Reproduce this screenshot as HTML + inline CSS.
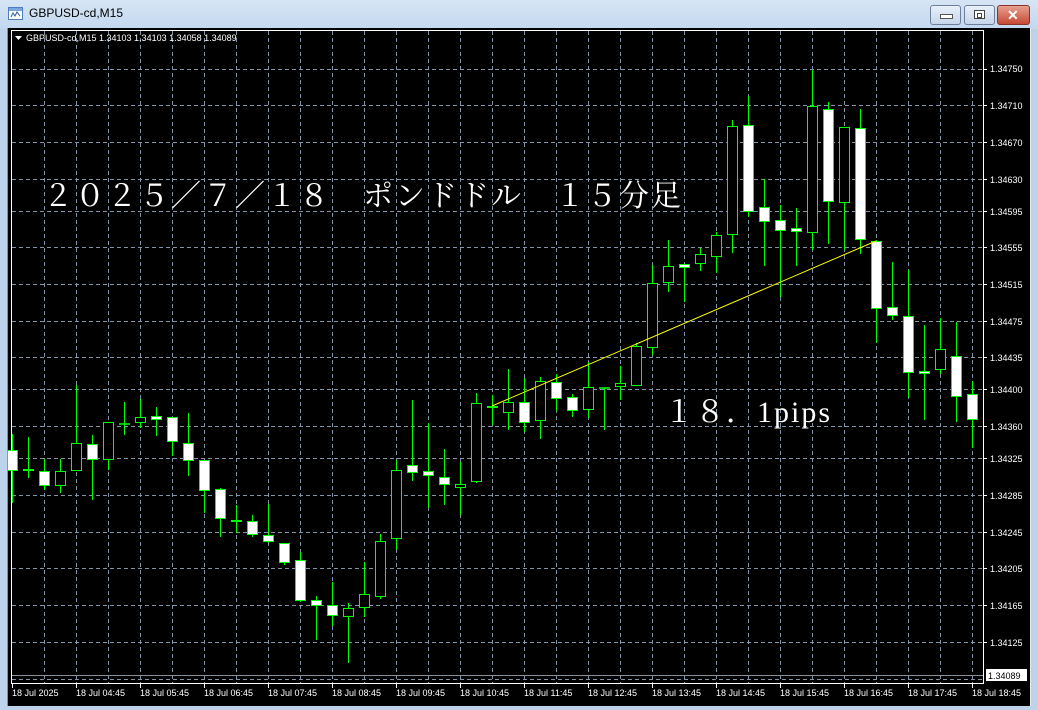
<!DOCTYPE html>
<html><head><meta charset="utf-8"><style>
html,body{margin:0;padding:0;width:1038px;height:710px;overflow:hidden;background:#bdd3ec;font-family:"Liberation Sans",sans-serif}
#tb{position:absolute;left:0;top:0;width:1038px;height:29px;background:linear-gradient(#d6e5f5,#c3d8ef)}
#tt{position:absolute;left:29px;top:6px;font-size:12px;color:#000}
.btn{position:absolute;top:5px;height:18px;border:1px solid #6d7f99;border-radius:3px;background:linear-gradient(#e8f0fa,#c6d6ea)}
</style></head><body>
<div id="tb"></div>
<svg style="position:absolute;left:8px;top:7px" width="16" height="14"><rect x="0.5" y="0.5" width="14" height="12" fill="#fff" stroke="#4b7ec0"/><rect x="1" y="1" width="13" height="3" fill="#7aa6dc"/><path d="M3 10 L5 6 L7 9 L9 5 L12 9" stroke="#2a5fa8" fill="none"/></svg>
<div id="tt">GBPUSD-cd,M15</div>
<div class="btn" style="left:930px;width:29px"><div style="position:absolute;left:9px;top:8px;width:11px;height:3px;background:#fff;border:1px solid #555"></div></div>
<div class="btn" style="left:964px;width:29px"><div style="position:absolute;left:9px;top:4px;width:9px;height:7px;border:1px solid #444;background:#fff"><div style="margin:2px;height:3px;border:1px solid #444;width:3px"></div></div></div>
<div class="btn" style="left:997px;width:31px;background:linear-gradient(#e7a090,#c64a36);border-color:#8a3328"><div style="position:absolute;left:9px;top:1px;color:#fff;font-weight:bold;font-size:14px">✕</div></div>
<svg style="position:absolute;left:0;top:0" width="1038" height="710" font-family="Liberation Sans, sans-serif">
<rect x="8" y="28" width="1022" height="678" fill="#000"/>
<rect x="7" y="28" width="1" height="678" fill="#8a8f96"/>
<rect x="1030" y="28" width="1" height="678" fill="#e8e8e8"/>
<g stroke="#8494a8" stroke-width="1" stroke-dasharray="4,3">
<line x1="12" y1="69.5" x2="983" y2="69.5"/><line x1="12" y1="105.5" x2="983" y2="105.5"/><line x1="12" y1="142.5" x2="983" y2="142.5"/><line x1="12" y1="179.5" x2="983" y2="179.5"/><line x1="12" y1="211.5" x2="983" y2="211.5"/><line x1="12" y1="247.5" x2="983" y2="247.5"/><line x1="12" y1="284.5" x2="983" y2="284.5"/><line x1="12" y1="321.5" x2="983" y2="321.5"/><line x1="12" y1="357.5" x2="983" y2="357.5"/><line x1="12" y1="389.5" x2="983" y2="389.5"/><line x1="12" y1="426.5" x2="983" y2="426.5"/><line x1="12" y1="458.5" x2="983" y2="458.5"/><line x1="12" y1="495.5" x2="983" y2="495.5"/><line x1="12" y1="532.5" x2="983" y2="532.5"/><line x1="12" y1="568.5" x2="983" y2="568.5"/><line x1="12" y1="605.5" x2="983" y2="605.5"/><line x1="12" y1="642.5" x2="983" y2="642.5"/><line x1="12" y1="679.5" x2="983" y2="679.5"/>
<line x1="44.5" y1="31" x2="44.5" y2="683"/><line x1="76.5" y1="31" x2="76.5" y2="683"/><line x1="108.5" y1="31" x2="108.5" y2="683"/><line x1="140.5" y1="31" x2="140.5" y2="683"/><line x1="172.5" y1="31" x2="172.5" y2="683"/><line x1="204.5" y1="31" x2="204.5" y2="683"/><line x1="236.5" y1="31" x2="236.5" y2="683"/><line x1="268.5" y1="31" x2="268.5" y2="683"/><line x1="300.5" y1="31" x2="300.5" y2="683"/><line x1="332.5" y1="31" x2="332.5" y2="683"/><line x1="364.5" y1="31" x2="364.5" y2="683"/><line x1="396.5" y1="31" x2="396.5" y2="683"/><line x1="428.5" y1="31" x2="428.5" y2="683"/><line x1="460.5" y1="31" x2="460.5" y2="683"/><line x1="492.5" y1="31" x2="492.5" y2="683"/><line x1="524.5" y1="31" x2="524.5" y2="683"/><line x1="556.5" y1="31" x2="556.5" y2="683"/><line x1="588.5" y1="31" x2="588.5" y2="683"/><line x1="620.5" y1="31" x2="620.5" y2="683"/><line x1="652.5" y1="31" x2="652.5" y2="683"/><line x1="684.5" y1="31" x2="684.5" y2="683"/><line x1="716.5" y1="31" x2="716.5" y2="683"/><line x1="748.5" y1="31" x2="748.5" y2="683"/><line x1="780.5" y1="31" x2="780.5" y2="683"/><line x1="812.5" y1="31" x2="812.5" y2="683"/><line x1="844.5" y1="31" x2="844.5" y2="683"/><line x1="876.5" y1="31" x2="876.5" y2="683"/><line x1="908.5" y1="31" x2="908.5" y2="683"/><line x1="940.5" y1="31" x2="940.5" y2="683"/><line x1="972.5" y1="31" x2="972.5" y2="683"/>
</g>
<line x1="12" y1="675.5" x2="983" y2="675.5" stroke="#8a9098"/>
<g stroke="#00ff00" stroke-width="1" fill="#000">
<line x1="12.5" y1="434" x2="12.5" y2="503"/><rect x="7.5" y="450.5" width="10" height="20" fill="#fff"/>
<line x1="28.5" y1="437" x2="28.5" y2="478"/><line x1="23" y1="470" x2="34" y2="470" stroke-width="2"/>
<line x1="44.5" y1="459" x2="44.5" y2="490"/><rect x="39.5" y="471.5" width="10" height="14" fill="#fff"/>
<line x1="60.5" y1="459" x2="60.5" y2="493"/><rect x="55.5" y="471.5" width="10" height="14"/>
<line x1="76.5" y1="385" x2="76.5" y2="470"/><rect x="71.5" y="443.5" width="10" height="27"/>
<line x1="92.5" y1="435" x2="92.5" y2="500"/><rect x="87.5" y="444.5" width="10" height="15" fill="#fff"/>
<line x1="108.5" y1="422" x2="108.5" y2="470"/><rect x="103.5" y="422.5" width="10" height="37"/>
<line x1="124.5" y1="402" x2="124.5" y2="435"/><line x1="119" y1="424" x2="130" y2="424" stroke-width="1.5"/>
<line x1="140.5" y1="399" x2="140.5" y2="428"/><rect x="135.5" y="417.5" width="10" height="5"/>
<line x1="156.5" y1="407" x2="156.5" y2="436"/><rect x="151.5" y="416.5" width="10" height="3" fill="#fff"/>
<line x1="172.5" y1="417" x2="172.5" y2="456"/><rect x="167.5" y="417.5" width="10" height="24" fill="#fff"/>
<line x1="188.5" y1="413" x2="188.5" y2="476"/><rect x="183.5" y="443.5" width="10" height="17" fill="#fff"/>
<line x1="204.5" y1="460" x2="204.5" y2="513"/><rect x="199.5" y="460.5" width="10" height="30" fill="#fff"/>
<line x1="220.5" y1="488" x2="220.5" y2="537"/><rect x="215.5" y="489.5" width="10" height="29" fill="#fff"/>
<line x1="236.5" y1="505" x2="236.5" y2="533"/><line x1="231" y1="521" x2="242" y2="521" stroke-width="2"/>
<line x1="252.5" y1="515" x2="252.5" y2="537"/><rect x="247.5" y="521.5" width="10" height="13" fill="#fff"/>
<line x1="268.5" y1="504" x2="268.5" y2="543"/><rect x="263.5" y="535.5" width="10" height="6" fill="#fff"/>
<line x1="284.5" y1="543" x2="284.5" y2="565"/><rect x="279.5" y="543.5" width="10" height="19" fill="#fff"/>
<line x1="300.5" y1="552" x2="300.5" y2="602"/><rect x="295.5" y="560.5" width="10" height="40" fill="#fff"/>
<line x1="316.5" y1="596" x2="316.5" y2="640"/><rect x="311.5" y="600.5" width="10" height="5" fill="#fff"/>
<line x1="332.5" y1="582" x2="332.5" y2="626"/><rect x="327.5" y="605.5" width="10" height="10" fill="#fff"/>
<line x1="348.5" y1="603" x2="348.5" y2="663"/><rect x="343.5" y="608.5" width="10" height="8"/>
<line x1="364.5" y1="562" x2="364.5" y2="617"/><rect x="359.5" y="594.5" width="10" height="13"/>
<line x1="380.5" y1="534" x2="380.5" y2="599"/><rect x="375.5" y="541.5" width="10" height="55"/>
<line x1="396.5" y1="460" x2="396.5" y2="550"/><rect x="391.5" y="470.5" width="10" height="68"/>
<line x1="412.5" y1="400" x2="412.5" y2="481"/><rect x="407.5" y="465.5" width="10" height="7" fill="#fff"/>
<line x1="428.5" y1="423" x2="428.5" y2="508"/><rect x="423.5" y="471.5" width="10" height="4" fill="#fff"/>
<line x1="444.5" y1="449" x2="444.5" y2="505"/><rect x="439.5" y="477.5" width="10" height="7" fill="#fff"/>
<line x1="460.5" y1="462" x2="460.5" y2="515"/><rect x="455.5" y="484.5" width="10" height="3"/>
<line x1="476.5" y1="393" x2="476.5" y2="483"/><rect x="471.5" y="403.5" width="10" height="78"/>
<line x1="492.5" y1="395" x2="492.5" y2="425"/><line x1="487" y1="407" x2="498" y2="407" stroke-width="2"/>
<line x1="508.5" y1="369" x2="508.5" y2="430"/><rect x="503.5" y="402.5" width="10" height="10"/>
<line x1="524.5" y1="378" x2="524.5" y2="432"/><rect x="519.5" y="402.5" width="10" height="20" fill="#fff"/>
<line x1="540.5" y1="377" x2="540.5" y2="439"/><rect x="535.5" y="381.5" width="10" height="39"/>
<line x1="556.5" y1="374" x2="556.5" y2="411"/><rect x="551.5" y="382.5" width="10" height="16" fill="#fff"/>
<line x1="572.5" y1="394" x2="572.5" y2="417"/><rect x="567.5" y="397.5" width="10" height="13" fill="#fff"/>
<line x1="588.5" y1="362" x2="588.5" y2="418"/><rect x="583.5" y="387.5" width="10" height="22"/>
<line x1="604.5" y1="388" x2="604.5" y2="430"/><line x1="599" y1="388" x2="610" y2="388" stroke-width="1.5"/>
<line x1="620.5" y1="366" x2="620.5" y2="400"/><rect x="615.5" y="383.5" width="10" height="3"/>
<line x1="636.5" y1="343" x2="636.5" y2="385"/><rect x="631.5" y="346.5" width="10" height="39"/>
<line x1="652.5" y1="265" x2="652.5" y2="355"/><rect x="647.5" y="283.5" width="10" height="64"/>
<line x1="668.5" y1="240" x2="668.5" y2="292"/><rect x="663.5" y="266.5" width="10" height="16"/>
<line x1="684.5" y1="264" x2="684.5" y2="302"/><rect x="679.5" y="264.5" width="10" height="3" fill="#fff"/>
<line x1="700.5" y1="248" x2="700.5" y2="271"/><rect x="695.5" y="254.5" width="10" height="9"/>
<line x1="716.5" y1="232" x2="716.5" y2="273"/><rect x="711.5" y="235.5" width="10" height="21"/>
<line x1="732.5" y1="120" x2="732.5" y2="253"/><rect x="727.5" y="126.5" width="10" height="108"/>
<line x1="748.5" y1="96" x2="748.5" y2="217"/><rect x="743.5" y="125.5" width="10" height="86" fill="#fff"/>
<line x1="764.5" y1="179" x2="764.5" y2="266"/><rect x="759.5" y="207.5" width="10" height="14" fill="#fff"/>
<line x1="780.5" y1="205" x2="780.5" y2="297"/><rect x="775.5" y="220.5" width="10" height="10" fill="#fff"/>
<line x1="796.5" y1="208" x2="796.5" y2="266"/><rect x="791.5" y="228.5" width="10" height="3" fill="#fff"/>
<line x1="812.5" y1="70" x2="812.5" y2="250"/><rect x="807.5" y="106.5" width="10" height="126"/>
<line x1="828.5" y1="102" x2="828.5" y2="244"/><rect x="823.5" y="109.5" width="10" height="92" fill="#fff"/>
<line x1="844.5" y1="127" x2="844.5" y2="250"/><rect x="839.5" y="127.5" width="10" height="75"/>
<line x1="860.5" y1="109" x2="860.5" y2="254"/><rect x="855.5" y="128.5" width="10" height="111" fill="#fff"/>
<line x1="876.5" y1="240" x2="876.5" y2="343"/><rect x="871.5" y="241.5" width="10" height="67" fill="#fff"/>
<line x1="892.5" y1="262" x2="892.5" y2="320"/><rect x="887.5" y="307.5" width="10" height="8" fill="#fff"/>
<line x1="908.5" y1="270" x2="908.5" y2="398"/><rect x="903.5" y="316.5" width="10" height="56" fill="#fff"/>
<line x1="924.5" y1="325" x2="924.5" y2="420"/><rect x="919.5" y="371.5" width="10" height="2" fill="#fff"/>
<line x1="940.5" y1="318" x2="940.5" y2="374"/><rect x="935.5" y="349.5" width="10" height="20"/>
<line x1="956.5" y1="322" x2="956.5" y2="422"/><rect x="951.5" y="356.5" width="10" height="40" fill="#fff"/>
<line x1="972.5" y1="381" x2="972.5" y2="448"/><rect x="967.5" y="394.5" width="10" height="25" fill="#fff"/>
</g>
<line x1="492" y1="406" x2="876" y2="241" stroke="#ffff00" stroke-width="1"/>
<path d="M11.5 30.5 H983.5 V683.5 H11.5 Z" fill="none" stroke="#fff"/>
<g fill="#fff" font-size="9">
<path d="M15 36 h7 l-3.5 4 z"/>
<text x="26" y="41">GBPUSD-cd,M15  1.34103 1.34103 1.34058 1.34089</text>
<g>
<text x="990" y="72">1.34750</text><text x="990" y="109">1.34710</text><text x="990" y="146">1.34670</text><text x="990" y="183">1.34630</text><text x="990" y="215">1.34595</text><text x="990" y="251">1.34555</text><text x="990" y="288">1.34515</text><text x="990" y="325">1.34475</text><text x="990" y="361">1.34435</text><text x="990" y="393">1.34400</text><text x="990" y="430">1.34360</text><text x="990" y="462">1.34325</text><text x="990" y="499">1.34285</text><text x="990" y="536">1.34245</text><text x="990" y="572">1.34205</text><text x="990" y="609">1.34165</text><text x="990" y="646">1.34125</text>
</g>
<g stroke="#fff"><line x1="983" y1="69.5" x2="987" y2="69.5"/><line x1="983" y1="105.5" x2="987" y2="105.5"/><line x1="983" y1="142.5" x2="987" y2="142.5"/><line x1="983" y1="179.5" x2="987" y2="179.5"/><line x1="983" y1="211.5" x2="987" y2="211.5"/><line x1="983" y1="247.5" x2="987" y2="247.5"/><line x1="983" y1="284.5" x2="987" y2="284.5"/><line x1="983" y1="321.5" x2="987" y2="321.5"/><line x1="983" y1="357.5" x2="987" y2="357.5"/><line x1="983" y1="389.5" x2="987" y2="389.5"/><line x1="983" y1="426.5" x2="987" y2="426.5"/><line x1="983" y1="458.5" x2="987" y2="458.5"/><line x1="983" y1="495.5" x2="987" y2="495.5"/><line x1="983" y1="532.5" x2="987" y2="532.5"/><line x1="983" y1="568.5" x2="987" y2="568.5"/><line x1="983" y1="605.5" x2="987" y2="605.5"/><line x1="983" y1="642.5" x2="987" y2="642.5"/></g>
<rect x="986" y="669" width="41" height="12" fill="#fff"/>
<text x="988" y="679" fill="#000">1.34089</text>
<g stroke="#fff"><line x1="12.5" y1="684" x2="12.5" y2="688"/><line x1="76.5" y1="684" x2="76.5" y2="688"/><line x1="140.5" y1="684" x2="140.5" y2="688"/><line x1="204.5" y1="684" x2="204.5" y2="688"/><line x1="268.5" y1="684" x2="268.5" y2="688"/><line x1="332.5" y1="684" x2="332.5" y2="688"/><line x1="396.5" y1="684" x2="396.5" y2="688"/><line x1="460.5" y1="684" x2="460.5" y2="688"/><line x1="524.5" y1="684" x2="524.5" y2="688"/><line x1="588.5" y1="684" x2="588.5" y2="688"/><line x1="652.5" y1="684" x2="652.5" y2="688"/><line x1="716.5" y1="684" x2="716.5" y2="688"/><line x1="780.5" y1="684" x2="780.5" y2="688"/><line x1="844.5" y1="684" x2="844.5" y2="688"/><line x1="908.5" y1="684" x2="908.5" y2="688"/><line x1="972.5" y1="684" x2="972.5" y2="688"/></g>
<text x="12" y="696">18 Jul 2025</text><text x="76" y="696">18 Jul 04:45</text><text x="140" y="696">18 Jul 05:45</text><text x="204" y="696">18 Jul 06:45</text><text x="268" y="696">18 Jul 07:45</text><text x="332" y="696">18 Jul 08:45</text><text x="396" y="696">18 Jul 09:45</text><text x="460" y="696">18 Jul 10:45</text><text x="524" y="696">18 Jul 11:45</text><text x="588" y="696">18 Jul 12:45</text><text x="652" y="696">18 Jul 13:45</text><text x="716" y="696">18 Jul 14:45</text><text x="780" y="696">18 Jul 15:45</text><text x="844" y="696">18 Jul 16:45</text><text x="908" y="696">18 Jul 17:45</text><text x="972" y="696">18 Jul 18:45</text>
</g>
<g fill="#fff" font-family="Liberation Serif, Noto Serif CJK SC, serif" font-size="30">
<text x="43" y="206" letter-spacing="2">２０２５／７／１８　ポンドドル　１５分足</text>
<text x="664" y="422" letter-spacing="1">１８．<tspan letter-spacing="2">1pips</tspan></text>
</g>
</svg>
</body></html>
